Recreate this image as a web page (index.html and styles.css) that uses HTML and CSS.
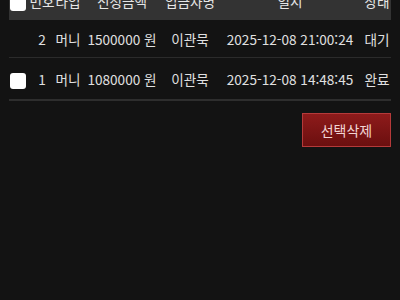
FILE: index.html
```html
<!DOCTYPE html>
<html lang="ko">
<head>
<meta charset="utf-8">
<link rel="stylesheet" href="styles.css">
</head>
<body>
<div class="wrap">
  <table class="list">
    <colgroup>
      <col class="c-chk"><col class="c-no"><col class="c-type"><col class="c-amt"><col class="c-name"><col class="c-date"><col class="c-st">
    </colgroup>
    <thead>
      <tr>
        <th class="chk"><input type="checkbox" class="box"></th>
        <th>번호</th>
        <th>타입</th>
        <th>신청금액</th>
        <th>입금자명</th>
        <th>일시</th>
        <th>상태</th>
      </tr>
    </thead>
    <tbody>
      <tr>
        <td class="chk"></td>
        <td>2</td>
        <td>머니</td>
        <td>1500000 원</td>
        <td>이관묵</td>
        <td>2025-12-08 21:00:24</td>
        <td>대기</td>
      </tr>
      <tr class="tall">
        <td class="chk"><input type="checkbox" class="box"></td>
        <td>1</td>
        <td>머니</td>
        <td>1080000 원</td>
        <td>이관묵</td>
        <td>2025-12-08 14:48:45</td>
        <td>완료</td>
      </tr>
    </tbody>
  </table>
  <div class="actions">
    <button class="del">선택삭제</button>
  </div>
</div>
</body>
</html>
```
FILE: styles.css
```css
html, body {
  margin: 0;
  padding: 0;
  background: #131313;
}
body {
  font-family: "Noto Sans CJK KR", "Noto Sans", sans-serif;
  color: #e0e0e0;
  font-size: 13.6px;
}
.wrap {
  margin: -18px 9px 0 9px;
}
.list {
  width: 100%;
  border-collapse: collapse;
  table-layout: fixed;
}
.c-chk { width: 20px; }
.c-no { width: 26px; }
.c-type { width: 26px; }
.c-amt { width: 82px; }
.c-name { width: 54px; }
.c-date { width: 146px; }
.c-st { width: 28px; }
.list th {
  background: #333333;
  height: 38px;
  font-weight: normal;
  color: #e6e6e6;
  padding: 0;
  text-align: center;
  white-space: nowrap;
}
.list td {
  height: 37px;
  padding: 0;
  text-align: center;
  white-space: nowrap;
  border-bottom: 1px solid #2b2b2b;
}
.list tr.tall td {
  height: 41px;
}
.list tbody tr:last-child td {
  border-bottom: 2px solid #2e2e2e;
}
.list .chk {
  text-align: left;
  padding-left: 1px;
}
.box {
  appearance: none;
  -webkit-appearance: none;
  width: 16px;
  height: 16px;
  margin: 0;
  background: #ffffff;
  border-radius: 3px;
  vertical-align: middle;
  display: inline-block;
}
.actions {
  display: flex;
  justify-content: flex-end;
  margin-top: 12px;
}
.del {
  width: 89px;
  height: 34px;
  background: linear-gradient(#8e1b1b, #6b0f0f);
  border: 1px solid #b53a3a;
  color: #f2d4d4;
  font-family: "Noto Sans CJK KR", sans-serif;
  font-size: 14px;
  padding: 0;
}
```
